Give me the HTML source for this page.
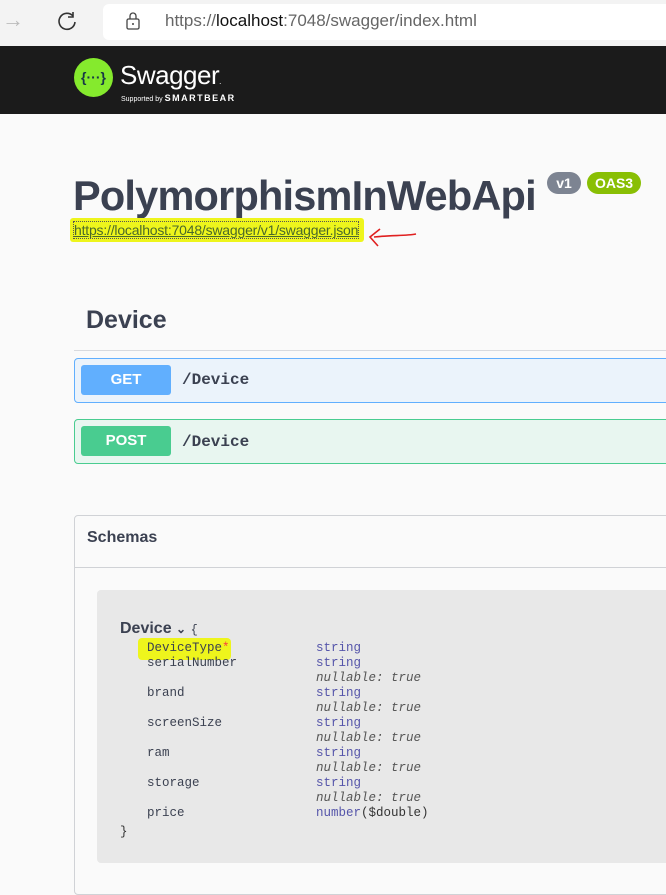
<!DOCTYPE html>
<html><head><style>
*{margin:0;padding:0;box-sizing:border-box}
body{width:666px;height:877px;overflow:hidden;background:#fafafa;font-family:"Liberation Sans",sans-serif;position:relative}
.abs{position:absolute}
.mono{font-family:"Liberation Mono","DejaVu Sans Mono",monospace}
</style></head><body>
<div class="abs" style="left:0;top:0;width:666px;height:46px;background:#f3f3f3"></div>
<div class="abs" style="left:103px;top:4px;width:570px;height:36px;background:#fff;border-radius:6px"></div>
<div class="abs" style="left:2px;top:7px;font-size:22px;color:#bbb">→</div>
<svg class="abs" style="left:56px;top:10px" width="22" height="22" viewBox="0 0 22 22"><path d="M17 6A8 8 0 1 0 19 12" fill="none" stroke="#333" stroke-width="1.6"/><path d="M17 2v5h-5" fill="none" stroke="#333" stroke-width="1.6"/></svg>
<svg class="abs" style="left:125px;top:11px" width="16" height="20" viewBox="0 0 16 20"><rect x="2" y="8" width="12" height="10" rx="1.5" fill="none" stroke="#444" stroke-width="1.3"/><path d="M5 8V5a3 3 0 0 1 6 0v3" fill="none" stroke="#444" stroke-width="1.3"/><circle cx="8" cy="13" r="1" fill="#444"/></svg>
<div class="abs" style="left:165px;top:11px;font-size:17px;color:#666">https://<span style="color:#111">localhost</span>:7048/swagger/index.html</div>
<div class="abs" style="left:0;top:46px;width:666px;height:68px;background:#1b1b1b"></div>
<div class="abs" style="left:74px;top:58px;width:39px;height:39px;border-radius:50%;background:#85ea2d;color:#173647;font-weight:bold;font-size:14px;text-align:center;line-height:39px">{···}</div>
<div class="abs" style="top:60px;font-size:26px;color:#fff;left:120px;letter-spacing:-0.5px">Swagger<span style="font-size:8px">.</span></div>
<div class="abs" style="left:121px;top:93px;font-size:7px;color:#fff">Supported by <span style="font-size:9px;font-weight:bold;letter-spacing:1.5px">SMARTBEAR</span></div>
<div class="abs" style="left:73px;top:172px;font-size:41.5px;font-weight:bold;color:#3b4151;letter-spacing:-0.8px;white-space:nowrap">PolymorphismInWebApi</div>
<div class="abs" style="left:547px;top:172px;width:34px;height:22px;border-radius:11px;background:#7d8492;color:#fff;font-weight:bold;font-size:14px;text-align:center;line-height:22px">v1</div>
<div class="abs" style="left:587px;top:172px;width:54px;height:22px;border-radius:11px;background:#89bf04;color:#fff;font-weight:bold;font-size:14px;text-align:center;line-height:22px">OAS3</div>
<div class="abs" style="left:70px;top:218px;width:294px;height:24px;background:#eef51c;border-radius:3px"></div>
<div class="abs" style="left:73px;top:221px;font-size:14px;color:#4a6a2a;text-decoration:underline;letter-spacing:-0.2px;border:1px dotted #555;white-space:nowrap">https://localhost:7048/swagger/v1/swagger.json</div>
<svg class="abs" style="left:366px;top:226px" width="52" height="22"><path d="M50 8 C40 10 25 9 8 11 M14 3 L4 11 L12 20" fill="none" stroke="#e02020" stroke-width="1.6"/></svg>
<div class="abs" style="left:86px;top:306px;font-size:25px;font-weight:bold;color:#3b4151">Device</div>
<div class="abs" style="left:74px;top:350px;width:592px;height:1px;background:#d8dade"></div>
<div class="abs" style="left:74px;top:358px;width:600px;height:45px;background:#ebf3fb;border:1px solid #61affe;border-radius:4px"></div>
<div class="abs" style="left:81px;top:365px;width:90px;height:30px;background:#61affe;border-radius:3px;color:#fff;font-weight:bold;font-size:15px;text-align:center;line-height:30px">GET</div>
<div class="abs mono" style="left:182px;top:371px;font-size:16px;font-weight:bold;color:#3b4151">/Device</div>
<div class="abs" style="left:74px;top:419px;width:600px;height:45px;background:#e8f6f0;border:1px solid #49cc90;border-radius:4px"></div>
<div class="abs" style="left:81px;top:426px;width:90px;height:30px;background:#49cc90;border-radius:3px;color:#fff;font-weight:bold;font-size:15px;text-align:center;line-height:30px">POST</div>
<div class="abs mono" style="left:182px;top:433px;font-size:16px;font-weight:bold;color:#3b4151">/Device</div>
<div class="abs" style="left:74px;top:515px;width:600px;height:380px;border:1px solid #d0d2d6;border-radius:4px"></div>
<div class="abs" style="left:87px;top:529px;font-size:16px;font-weight:bold;color:#3b4151">Schemas</div>
<div class="abs" style="left:75px;top:567px;width:600px;height:1px;background:#d0d2d6"></div>
<div class="abs" style="left:97px;top:590px;width:580px;height:273px;background:#e8e8e8;border-radius:4px"></div>
<div class="abs" style="left:120px;top:620px;font-size:16px;font-weight:bold;color:#3b4151">Device <span style="font-size:12px">⌄</span> <span class="mono" style="font-weight:normal;font-size:12px">{</span></div>
<div class="abs" style="left:138px;top:638px;width:93px;height:22px;background:#eef51c;border-radius:4px"></div>
<div class="abs mono" style="left:147px;top:641px;font-size:12.5px;line-height:15px;color:#3b4151;white-space:pre">DeviceType<span style="color:#f93e3e">*</span>
serialNumber

brand

screenSize

ram

storage

price</div>
<div class="abs mono" style="left:316px;top:641px;font-size:12.5px;line-height:15px;color:#55a;white-space:pre">string
string
<i style="color:#555">nullable: true</i>
string
<i style="color:#555">nullable: true</i>
string
<i style="color:#555">nullable: true</i>
string
<i style="color:#555">nullable: true</i>
string
<i style="color:#555">nullable: true</i>
number<span style="color:#333">($double)</span></div>
<div class="abs mono" style="left:120px;top:825px;font-size:12.5px;color:#333">}</div>
</body></html>
